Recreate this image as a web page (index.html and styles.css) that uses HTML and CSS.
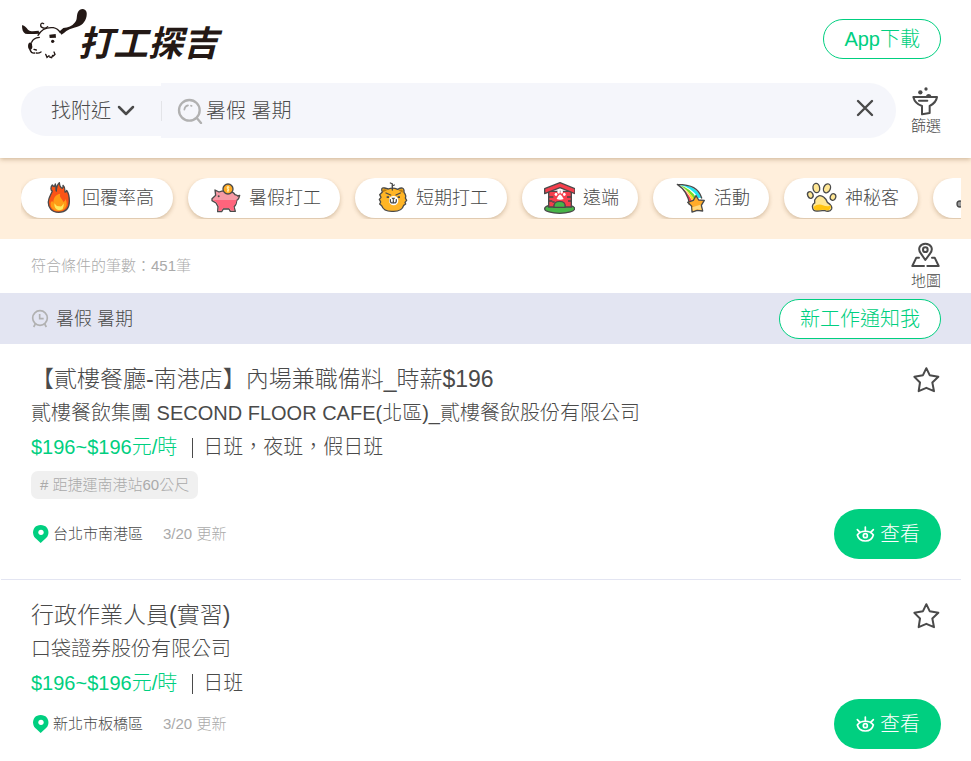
FILE: index.html
```html
<!DOCTYPE html>
<html lang="zh-Hant">
<head>
<meta charset="utf-8">
<meta name="viewport" content="width=device-width, initial-scale=1">
<title>打工探吉</title>
<link rel="stylesheet" href="styles.css">
</head>
<body>
<svg class="sprite" aria-hidden="true">
  <symbol id="star" viewBox="336 47 84 80"><path d="M376 53 L386 74 L412 79 L394 96 L399 122 L376 112 L353 122 L357 96 L340 79 L366 74Z" fill="none" stroke="#4a4a4a" stroke-width="6" stroke-linejoin="round"/></symbol>
  <symbol id="eye" viewBox="163 525 60 54"><g fill="none" stroke="#fff" stroke-width="5" stroke-linecap="round"><path d="M170 555 C180 540 208 540 218 555 C212 579 176 579 170 555Z"/><circle cx="194" cy="557" r="6"/><path d="M194 531 V543 M170 539 L178 547 M218 539 L210 547"/></g></symbol>
  <symbol id="pin" viewBox="93 522 54 60"><path d="M122 579 L105 563 C94 551 98 525 122 525 C146 525 151 551 139 563Z" fill="#00cf80"/><circle cx="123" cy="547" r="8" fill="#fff"/></symbol>
</svg>

<header class="header">
  <div class="topbar">
    <a class="logo" href="#">
      <svg class="logo-mark" viewBox="63 24 204 153" aria-hidden="true">
        <g fill="#231815">
          <path d="M66 76 C72 74 78 82 84 89 C92 96 104 93 116 92 L118 101 C104 101 90 104 76 101 C68 97 66 88 66 76Z"/>
          <path d="M179 94 L190 84 C205 82 216 78 224 68 C234 58 228 48 234 36 C240 23 258 24 260 38 C262 58 250 76 232 80 C215 84 200 90 192 99 L184 104Z"/>
          <path d="M148 104 L167 102 L168 113 L149 114Z"/>
          <circle cx="158" cy="124" r="5"/>
          <path d="M85 132 C90 124 98 128 96 136 C99 143 95 150 90 150 C84 148 83 139 85 132Z"/>
        </g>
        <g fill="none" stroke="#231815" stroke-width="4" stroke-linecap="round">
          <path d="M114 106 C124 88 140 81 160 83 C170 85 176 90 181 98"/>
          <path d="M143 80 C136 88 122 84 122 76 C122 69 127 68 131 71"/>
          <path d="M118 112 C108 113 98 118 95 127"/>
          <path d="M90 149 C93 157 98 160 104 159 M102 148 L109 150 M109 159 Q116 161 123 156"/>
          <path d="M137 163 L141 172 L147 167 M149 171 L155 173 L158 166 M160 168 L165 163 L162 156"/>
        </g>
      </svg>
      <span class="logo-text">打工探吉</span>
    </a>
    <a class="outline-button app-button" href="#">App下載</a>
  </div>
  <form class="search-row">
    <button class="nearby" type="button">找附近
      <svg class="chevron" viewBox="0 0 18 12" aria-hidden="true"><path d="M2 2 L9 9 L16 2" fill="none" stroke="#4a4a4a" stroke-width="2.5" stroke-linecap="round" stroke-linejoin="round"/></svg>
    </button>
    <div class="search-box">
      <svg class="magnifier" viewBox="534 294 78 78" aria-hidden="true"><g fill="none" stroke="#b1b1b1" stroke-width="7" stroke-linecap="round"><circle cx="571" cy="331" r="31"/><path d="M594 355 L606 369"/><path d="M556 329 Q557 318 567 316 M576 317 L578 318" stroke-width="5"/></g></svg>
      <input class="search-input" type="text" aria-label="搜尋工作" value="暑假 暑期">
      <button class="clear" type="button" aria-label="清除"><svg viewBox="0 0 18 18"><path d="M2 2 L16 16 M16 2 L2 16" stroke="#4a4a4a" stroke-width="2.4" stroke-linecap="round"/></svg></button>
    </div>
    <button class="icon-button" type="button">
      <svg viewBox="394 252 87 90" aria-hidden="true"><g fill="none" stroke="#4a4a4a" stroke-width="6" stroke-linejoin="round" stroke-linecap="round"><path d="M401 285 H472 C470 298 462 306 450 312 V333 L427 337 V312 C412 307 404 298 401 285Z"/><path d="M418 296 H443"/></g><g fill="#4a4a4a"><circle cx="422" cy="271" r="6.5"/><circle cx="439" cy="261" r="5"/><path d="M439 283 C441 274 453 274 455 283Z"/></g></svg>
      <span>篩選</span>
    </button>
  </form>
</header>

<nav class="categories" aria-label="分類">
  <div class="pills">
    <a class="pill" href="#"><svg viewBox="126 66 96 96" aria-hidden="true">
      <path d="M176 157 C154 157 144 142 145 125 C146 112 153 104 157 93 C152 91 151 82 157 75 Q162 82 164 78 L166 72 C170 82 166 90 169 93 C169 82 172 74 178 68 C179 79 183 84 187 85 Q190 81 189 76 C196 82 195 89 195 96 C198 97 200 93 200 91 C207 100 208 112 208 124 C208 145 196 157 176 157Z" fill="#fa5417" stroke="#4a4a4a" stroke-width="4" stroke-linejoin="round"/>
      <path d="M177 153 C158 153 150 141 152 128 Q157 120 160 128 C160 112 168 103 181 101 C176 112 188 116 190 126 Q197 123 196 117 C207 136 195 153 177 153Z" fill="#ff9b16"/><path d="M163 130 Q162 149 177 151 Q193 151 191 130 Q185 142 179 139 Q169 140 163 130Z" fill="#ffe75b"/></svg>回覆率高</a>
    <a class="pill" href="#"><svg viewBox="627 66 96 96" aria-hidden="true">
      <path d="M645 90 L657 96 C670 90 698 91 705 104 Q712 106 713 108 L719 106 Q716 119 710 121 Q709 135 702 140 L706 154 H691 L687 147 H670 L665 155 H653 L654 140 L648 129 L636 122 V116 L647 106Z" fill="#f69aa5" stroke="#4a4a4a" stroke-width="4" stroke-linejoin="round"/>
      <path d="M639 120 H710 Q708 134 700 139 L703 151 H693 L688 144 H669 L663 152 H656 L657 139 L649 126Z" fill="#ff647c"/>
      <circle cx="684" cy="87" r="15" fill="#ffab25" stroke="#4a4a4a" stroke-width="4"/><path d="M688 82 Q681 78 681 84 Q681 86 685 87 Q690 91 681 93 M684 78 V97" fill="none" stroke="#fff5bc" stroke-width="3"/><circle cx="656" cy="109" r="3" fill="#4a4a4a"/></svg>暑假打工</a>
    <a class="pill" href="#"><svg viewBox="93 66 96 96" aria-hidden="true">
      <path d="M112 96 Q106 81 119 84 L130 87 Q143 81 158 88 Q179 77 177 97 Q185 107 181 114 L185 121 L180 127 L182 132 L176 136 Q171 154 146 154 Q116 156 110 137 L104 132 L107 126 L103 118 L108 112 L104 104Z" fill="#ffb526" stroke="#4a4a4a" stroke-width="4" stroke-linejoin="round"/>
      <path d="M114 97 Q110 84 127 90Z M160 91 Q176 84 173 98Z" fill="#bd7c12"/><circle cx="146" cy="122" r="14" fill="#fff"/><path d="M136 69 L142 72 L142 90 M148 75 L141 78 M123 99 L137 105 M166 99 L153 105 M136 119 Q135 131 145 128 Q155 131 154 119 M145 122 V129" fill="none" stroke="#4a4a4a" stroke-width="4" stroke-linecap="round"/><path d="M139 113 H151 L145 121Z M125 109 H132 V114 H125Z M158 109 H165 V114 H158Z" fill="#4a4a4a"/></svg>短期打工</a>
    <a class="pill" href="#"><svg viewBox="594 66 96 96" aria-hidden="true">
      <ellipse cx="644" cy="146" rx="45" ry="14" fill="#47b548" stroke="#4a4a4a" stroke-width="4"/>
      <path d="M611 94 H679 V141 H611Z" fill="#f63e4c" stroke="#4a4a4a" stroke-width="4"/><path d="M599 86 L645 68 L690 86 V101 L645 83 L599 101Z" fill="#f63e4c" stroke="#4a4a4a" stroke-width="4" stroke-linejoin="round"/><path d="M627 142 Q625 124 644 124 Q663 124 660 142Z" fill="#47b548" stroke="#4a4a4a" stroke-width="4"/><path d="M611 111 H625 M611 123 H622 M679 111 H666 M679 123 H669 M629 126 H622" stroke="#4a4a4a" stroke-width="4"/><g fill="#fff"><ellipse cx="633" cy="103" rx="4" ry="5"/><ellipse cx="641" cy="95" rx="4" ry="6"/><ellipse cx="650" cy="95" rx="4" ry="6"/><ellipse cx="658" cy="103" rx="4" ry="5"/><path d="M645 103 Q653 108 656 117 Q645 121 635 117 Q637 108 645 103Z"/></g></svg>遠端</a>
    <a class="pill" href="#"><svg viewBox="105 96 96 96" aria-hidden="true">
      <path d="M115 103 C157 104 179 114 188 144 L151 166 Q147 124 115 103Z" fill="#fff"/><path d="M120 104 Q170 104 187 143 L178 144 Q160 112 120 104Z" fill="#20e5f2"/><path d="M121 105 Q158 116 174 147 L168 151 Q147 120 121 105Z" fill="#73dc28"/><path d="M120 105 Q149 123 167 148 L160 154 Q146 120 120 105Z" fill="#ffd62d"/><path d="M118 105 Q144 122 160 154 L151 163 Q145 123 118 105Z" fill="#f63e4c"/><path d="M115 103 C157 104 179 114 188 144 M151 163 Q147 124 115 103" fill="none" stroke="#4a4a4a" stroke-width="4" stroke-linecap="round"/>
      <path d="M171 137 L179 150 L196 151 L187 166 L191 183 L175 181 L159 186 L158 169 L146 157 L163 151Z" fill="#ffab29" stroke="#4a4a4a" stroke-width="4" stroke-linejoin="round"/><path d="M160 172 L184 164 L188 180 L174 178 L162 183Z" fill="#ffd77b"/></svg>活動</a>
    <a class="pill" href="#"><svg viewBox="501 96 96 96" aria-hidden="true">
      <g fill="#ffe794" stroke="#4a4a4a" stroke-width="4"><ellipse cx="517" cy="135" rx="8" ry="10" transform="rotate(-25 517 135)"/><ellipse cx="535" cy="114" rx="10" ry="14" transform="rotate(-8 535 114)"/><ellipse cx="567" cy="115" rx="10" ry="14" transform="rotate(22 567 115)"/><ellipse cx="585" cy="141" rx="8" ry="10" transform="rotate(20 585 141)"/><path d="M530 150 Q541 129 558 142 Q564 146 568 157 Q584 167 581 177 Q575 188 559 181 Q545 183 539 183 Q525 184 524 174 Q521 164 530 159Z"/></g><path d="M527 170 Q538 161 550 164 Q572 172 578 166 Q581 181 566 181 Q557 177 541 181 Q526 182 527 170Z" fill="#ffc411"/></svg>神秘客</a>
    <a class="pill" href="#" aria-label="更多"><svg viewBox="948 96 96 96" aria-hidden="true"><circle cx="966" cy="162" r="9" fill="#999" stroke="#4a4a4a" stroke-width="4"/></svg></a>
  </div>
</nav>

<main>
  <div class="results-bar">
    <p class="count">符合條件的筆數：451筆</p>
    <button class="icon-button" type="button">
      <svg viewBox="813 276 87 78" aria-hidden="true"><g fill="none" stroke="#4a4a4a" stroke-width="6" stroke-linejoin="round" stroke-linecap="round"><path d="M856 330 L843 311 C831 296 841 281 856 281 C872 281 882 296 870 311Z"/><circle cx="856" cy="299" r="7"/><path d="M837 323 H829 L817 348 H852 M876 323 H884 L896 348 H862"/></g></svg>
      <span>地圖</span>
    </button>
  </div>
  <div class="alert-bar">
    <svg class="clock" viewBox="93 201 54 57" aria-hidden="true"><g fill="none" stroke="#b1b1b1" stroke-width="5"><circle cx="120" cy="228" r="22"/><path d="M119 216 V230 H131 M106 246 L101 255 M134 246 L139 255"/></g></svg>
    <span class="keyword">暑假 暑期</span>
    <button class="outline-button" type="button">新工作通知我</button>
  </div>

  <article class="job">
    <div class="job-head">
      <div>
        <h2 class="job-title">【貳樓餐廳-南港店】內場兼職備料_時薪$196</h2>
        <p class="company">貳樓餐飲集團 SECOND FLOOR CAFE(北區)_貳樓餐飲股份有限公司</p>
        <p class="salary"><span class="pay">$196~$196元/時</span><span class="shift">日班，夜班，假日班</span></p>
      </div>
      <button class="favorite" type="button" aria-label="收藏"><svg><use href="#star"/></svg></button>
    </div>
    <p class="tag"># 距捷運南港站60公尺</p>
    <div class="job-foot">
      <svg class="pin" aria-hidden="true"><use href="#pin"/></svg>
      <span class="place">台北市南港區</span><span class="updated">3/20 更新</span>
      <a class="view" href="#"><svg aria-hidden="true"><use href="#eye"/></svg>查看</a>
    </div>
  </article>

  <article class="job">
    <div class="job-head">
      <div>
        <h2 class="job-title">行政作業人員(實習)</h2>
        <p class="company">口袋證券股份有限公司</p>
        <p class="salary"><span class="pay">$196~$196元/時</span><span class="shift">日班</span></p>
      </div>
      <button class="favorite" type="button" aria-label="收藏"><svg><use href="#star"/></svg></button>
    </div>
    <div class="job-foot">
      <svg class="pin" aria-hidden="true"><use href="#pin"/></svg>
      <span class="place">新北市板橋區</span><span class="updated">3/20 更新</span>
      <a class="view" href="#"><svg aria-hidden="true"><use href="#eye"/></svg>查看</a>
    </div>
  </article>
</main>
</body>
</html>
```
FILE: styles.css
```css
* { box-sizing: border-box; }

body {
  margin: 0;
  background: #fff;
  color: #4a4a4a;
  font-family: "Liberation Sans", "Noto Sans CJK TC", sans-serif;
  font-size: 20px;
  font-weight: 300;
  line-height: 30px;
}

h2, p { margin: 0; font-weight: inherit; }
a { color: inherit; text-decoration: none; }
svg { display: block; flex: none; }
button, input { font: inherit; color: inherit; border: 0; padding: 0; background: none; }
button { cursor: pointer; }
.sprite { position: absolute; width: 0; height: 0; }

.header {
  position: relative;
  padding: 8px 30px 20px 21px;
  background: #fff;
  box-shadow: 0 1px 5px rgba(120, 80, 30, 0.4);
}

.topbar { display: flex; justify-content: space-between; align-items: center; height: 62px; }
.logo { display: flex; align-items: flex-start; height: 62px; color: #231815; }
.logo-mark { width: 68px; height: 51px; }
.logo-text {
  margin-top: 11px;
  margin-left: -11px;
  font-size: 35px;
  font-style: italic;
  font-weight: 700;
  line-height: 50px;
}

.outline-button {
  height: 40px;
  padding: 0 20px;
  border: 1px solid #00cf80;
  border-radius: 20px;
  background: #fff;
  color: #00cf80;
  line-height: 38px;
}

.search-row { display: flex; align-items: center; margin-top: 13px; }
.nearby {
  display: flex;
  align-items: center;
  gap: 6px;
  height: 50px;
  padding: 0 26px 0 30px;
  border-radius: 25px 0 0 25px;
  background: #f5f6fb;
}
.chevron { width: 18px; height: 12px; }
.search-box {
  display: flex;
  flex: 1;
  align-items: center;
  min-width: 0;
  height: 55px;
  padding: 0 22px 0 16px;
  border-radius: 0 28px 28px 0;
  background: linear-gradient(#e3e4e8, #e3e4e8) 0 center / 1px 20px no-repeat #f5f6fb;
}
.magnifier { width: 26px; height: 26px; }
.search-input { flex: 1; min-width: 0; height: 30px; margin-left: 3px; outline: 0; }
.clear { padding: 0 0 6px; }
.clear svg { width: 18px; height: 18px; }

.icon-button {
  display: flex;
  flex-direction: column;
  align-items: center;
  font-size: 15px;
  line-height: 20px;
}
.icon-button svg { width: 29px; height: 30px; }
.search-row .icon-button { margin-left: 15px; }

.categories { padding: 20px 10px 20px 21px; background: #ffefdc; }
.pills { display: flex; gap: 15px; height: 41px; overflow: hidden; }
.pill {
  display: flex;
  flex: none;
  align-items: center;
  gap: 8px;
  height: 40px;
  padding: 0 19px 0 21px;
  border-radius: 20px;
  background: #fff;
  box-shadow: 0 2px 4px rgba(120, 80, 30, 0.3);
  font-size: 18px;
}
.pill svg { width: 32px; height: 32px; }

.results-bar {
  display: flex;
  align-items: center;
  justify-content: space-between;
  height: 54px;
  padding: 0 30px 0 31px;
}
.count { color: #aaa; font-size: 15px; }
.results-bar .icon-button svg { height: 26px; margin-bottom: 3px; }

.alert-bar {
  display: flex;
  align-items: center;
  height: 51px;
  padding: 0 30px 0 31px;
  background: #e3e5f2;
}
.clock { width: 18px; height: 19px; }
.keyword { margin-left: 7px; font-size: 18px; }
.alert-bar .outline-button { margin-left: auto; }

.job {
  margin: 0 10px 0 1px;
  padding: 20px 20px 20px 30px;
  border-bottom: 1px solid #e3e5f2;
}
.job:last-child { border-bottom: 0; }
.job-head { display: flex; align-items: flex-start; justify-content: space-between; }
.job-title { font-size: 23px; line-height: 30px; }
.company { line-height: 38px; }
.salary { display: flex; align-items: center; line-height: 31px; }
.pay { color: #00cf80; }
.shift { display: flex; align-items: center; }
.shift::before { content: ""; width: 1px; height: 20px; margin: 0 10px 0 15px; background: #4a4a4a; }
.favorite { padding-top: 2px; }
.favorite svg { width: 28px; height: 27px; }
.tag {
  width: fit-content;
  margin: 8px 0 10px;
  padding: 0 9px;
  border-radius: 7px;
  background: #f0f0f0;
  color: #aaa;
  font-size: 15px;
  line-height: 28px;
}
.job-foot { display: flex; align-items: center; font-size: 15px; }
.pin { width: 18px; height: 20px; }
.place { margin-left: 4px; }
.updated { margin-left: 20px; color: #aaa; }
.view {
  display: flex;
  align-items: center;
  gap: 5px;
  height: 50px;
  margin-left: auto;
  padding: 0 21px;
  border-radius: 25px;
  background: #00cf80;
  color: #fff;
  font-size: 20px;
}
.view svg { width: 20px; height: 18px; }
```
